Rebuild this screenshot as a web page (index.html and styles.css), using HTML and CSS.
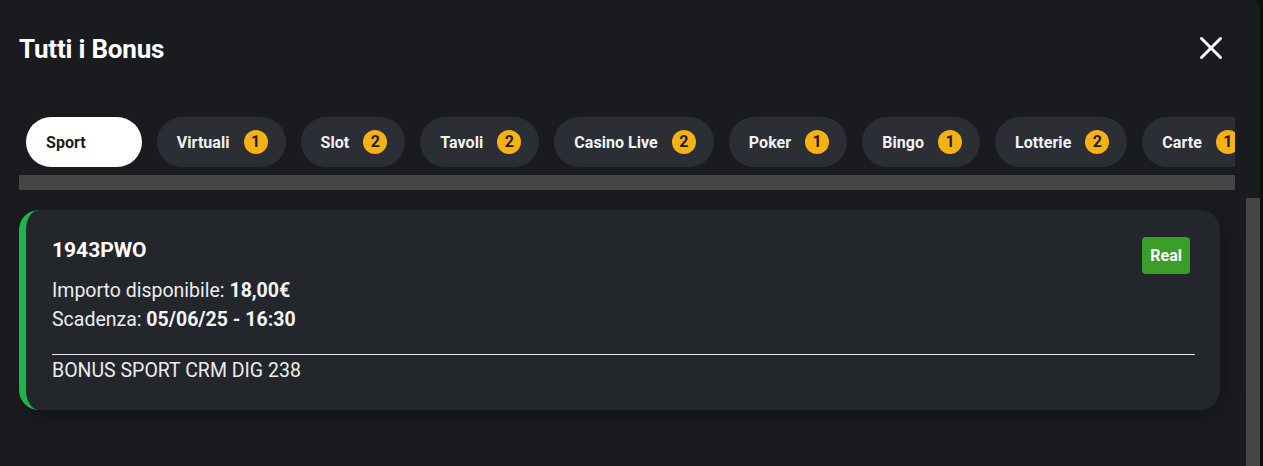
FILE: index.html
```html
<!DOCTYPE html>
<html lang="it">
<head>
    <meta charset="UTF-8">
    <meta name="viewport" content="width=device-width, initial-scale=1.0">
    <title>Tutti i Bonus</title>
    <link rel="stylesheet" href="styles.css">
</head>
<body>
    <div class="modal">
        <div class="header">
            <h1>Tutti i Bonus</h1>
            <button class="close" type="button" aria-label="Chiudi">
                <svg width="24" height="24" viewBox="0 0 24 24">
                    <path d="M2.5 2.5 L21.5 21.5 M21.5 2.5 L2.5 21.5" stroke="#fff" stroke-width="3" stroke-linecap="round" fill="none"/>
                </svg>
            </button>
        </div>

        <div class="tabs-wrap">
            <div class="tabs">
                <div class="tab active">Sport <span class="count hidden">0</span></div>
                <div class="tab">Virtuali <span class="count">1</span></div>
                <div class="tab">Slot <span class="count">2</span></div>
                <div class="tab">Tavoli <span class="count">2</span></div>
                <div class="tab">Casino Live <span class="count">2</span></div>
                <div class="tab">Poker <span class="count">1</span></div>
                <div class="tab">Bingo <span class="count">1</span></div>
                <div class="tab">Lotterie <span class="count">2</span></div>
                <div class="tab">Carte <span class="count">1</span></div>
            </div>
            <div class="hscroll"></div>
        </div>

        <div class="list-area">
            <div class="list">
                <div class="card">
                    <div class="card-top">
                        <div class="code">1943PWO</div>
                        <span class="tag">Real</span>
                    </div>
                    <div class="info">Importo disponibile: <strong>18,00€</strong></div>
                    <div class="info">Scadenza: <strong>05/06/25 - 16:30</strong></div>
                    <div class="card-foot">BONUS SPORT CRM DIG 238</div>
                </div>
            </div>
            <div class="vscroll"></div>
        </div>
    </div>
</body>
</html>
```

FILE: styles.css
```css
body {
    margin: 0;
    background: #0a120a;
    font-family: Roboto, "Liberation Sans", Arial, sans-serif;
    color: #fff;
    overflow: hidden;
}
.modal {
    width: 1260px;
    height: 466px;
    background: #191b1f;
    border-top-right-radius: 8px;
    padding-left: 19px;
    box-sizing: border-box;
    overflow: hidden;
}
.header {
    height: 96px;
    display: flex;
    align-items: center;
    justify-content: space-between;
    padding-right: 37px;
}
.header h1 {
    margin: 0;
    padding-top: 2px;
    font-size: 26px;
    font-weight: 700;
    line-height: 30px;
    letter-spacing: -0.2px;
}
.close {
    background: none;
    border: none;
    padding: 0;
    width: 24px;
    height: 24px;
    cursor: pointer;
}
.close svg {
    display: block;
}
.tabs-wrap {
    width: 1216px;
    margin-top: 21px;
}
.tabs {
    display: flex;
    gap: 15px;
    padding-left: 7px;
    overflow: hidden;
}
.tab {
    flex: none;
    display: flex;
    align-items: center;
    gap: 14px;
    height: 50px;
    padding: 0 18px 0 20px;
    border-radius: 25px;
    background: #2b2e35;
    font-size: 16px;
    font-weight: 700;
    letter-spacing: 0.05px;
    color: #f2f2f2;
}
.tab.active {
    background: #fff;
    color: #1b1d21;
}
.count {
    width: 24px;
    height: 24px;
    border-radius: 50%;
    background: #f6b213;
    color: #1d1d1d;
    font-size: 16px;
    line-height: 24px;
    text-align: center;
}
.count.hidden {
    visibility: hidden;
}
.hscroll {
    height: 15px;
    margin-top: 8px;
    background: #454545;
}
.list-area {
    display: flex;
    gap: 26px;
    margin-top: 8px;
}
.list {
    width: 1201px;
    padding-top: 12px;
}
.card {
    background: #23262b;
    border-left: 7px solid #1db547;
    border-radius: 20px;
    padding: 27px 25px 27px 26px;
    box-shadow: 4px 6px 16px rgba(0, 0, 0, 0.25);
}
.card-top {
    display: flex;
    justify-content: space-between;
    align-items: flex-start;
    padding-right: 5px;
}
.code {
    margin-top: 1px;
    font-size: 21px;
    font-weight: 700;
    line-height: 24px;
}
.tag {
    height: 37px;
    padding: 0 8px;
    border-radius: 4px;
    background: #3c9e28;
    font-size: 16px;
    font-weight: 700;
    line-height: 37px;
}
.info {
    font-size: 19.5px;
    line-height: 29px;
    color: #ececec;
}
.card-top + .info {
    margin-top: 2px;
}
.info strong {
    color: #f4f4f4;
}
.card-foot {
    margin-top: 20px;
    border-top: 1px solid #e8e8e8;
    padding-top: 4px;
    font-size: 19.5px;
    line-height: 24px;
    color: #ececec;
}
.vscroll {
    width: 14px;
    height: 300px;
    background: #454545;
}
```
